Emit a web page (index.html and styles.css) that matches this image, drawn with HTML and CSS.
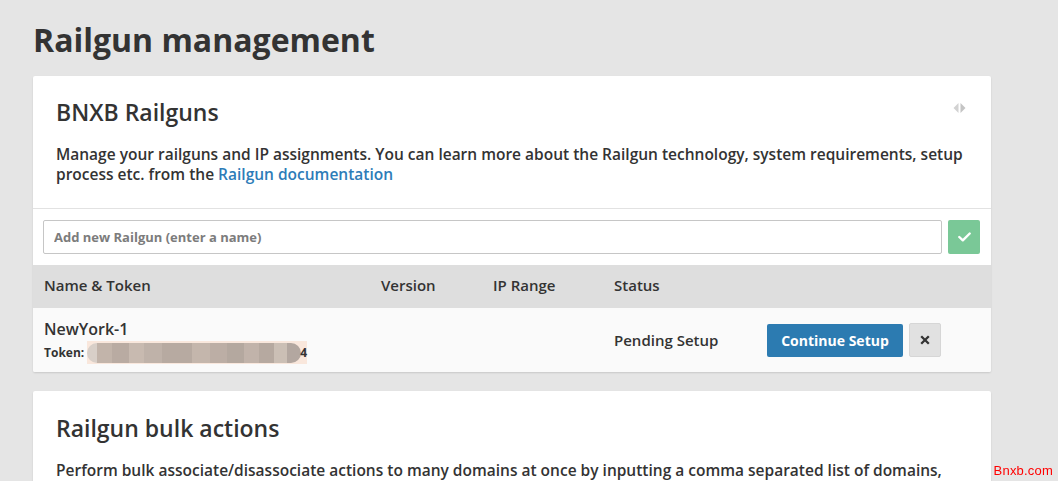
FILE: index.html
```html
<!DOCTYPE html>
<html>
<head>
<meta charset="utf-8">
<title>Railgun management</title>
<link rel="stylesheet" href="styles.css">
</head>
<body>
<div class="page">
  <h1 class="page-title">Railgun management</h1>

  <section class="card">
    <div class="card-head">
      <h2 class="card-title">BNXB Railguns</h2>
      <svg class="toggle-icon" width="13" height="10" viewBox="0 0 13 10" aria-hidden="true">
        <polygon points="5.5,0 0.5,5 5.5,10" fill="#d2d2d2"/>
        <polygon points="7.5,0 12.5,5 7.5,10" fill="#c4c4c4"/>
      </svg>
      <p class="card-desc">Manage your railguns and IP assignments. You can learn more about the Railgun technology, system requirements, setup process etc. from the <a class="link" href="#">Railgun documentation</a></p>
    </div>

    <div class="add-row">
      <input class="add-input" type="text" placeholder="Add new Railgun (enter a name)">
      <button class="add-btn" type="button" aria-label="Add">
        <svg width="13" height="10" viewBox="0 0 13 10" aria-hidden="true">
          <polyline points="1.3,5 4.8,8.3 11.7,1.5" fill="none" stroke="#fff" stroke-width="2.4" stroke-linecap="round" stroke-linejoin="round"/>
        </svg>
      </button>
    </div>

    <div class="rg-table">
      <div class="rg-head">
        <div class="col">Name &amp; Token</div>
        <div class="col">Version</div>
        <div class="col">IP Range</div>
        <div class="col">Status</div>
        <div class="col"></div>
      </div>
      <div class="rg-row">
        <div class="col name-cell">
          <div class="rg-name">NewYork-1</div>
          <div class="rg-token">Token: <span class="token-mask"><span class="token-blur"></span><span class="token-end">4</span></span></div>
        </div>
        <div class="col"></div>
        <div class="col"></div>
        <div class="col status">Pending Setup</div>
        <div class="col actions">
          <button class="btn-primary" type="button">Continue Setup</button>
          <button class="btn-remove" type="button" aria-label="Remove">
            <svg width="10" height="10" viewBox="0 0 10 10" aria-hidden="true">
              <path d="M1.2 1.2 L8.8 8.8 M8.8 1.2 L1.2 8.8" stroke="#333" stroke-width="2.3" stroke-linecap="butt"/>
            </svg>
          </button>
        </div>
      </div>
    </div>
  </section>

  <section class="card card-bulk">
    <div class="card-head card-head-plain">
      <h2 class="card-title">Railgun bulk actions</h2>
      <p class="card-desc">Perform bulk associate/disassociate actions to many domains at once by inputting a comma separated list of domains, and selecting the Railgun you want to use for them.</p>
    </div>
  </section>
</div>
<div class="watermark">Bnxb.com</div>
</body>
</html>
```

FILE: styles.css
```css
* {
  box-sizing: border-box;
}

html, body {
  margin: 0;
  padding: 0;
}

body {
  background: #e5e5e5;
  color: #333;
  font-family: "Open Sans", "Liberation Sans", sans-serif;
  overflow: hidden;
}

.page {
  width: 958px;
  margin-left: 33px;
  padding-top: 20px;
}

.page-title {
  margin: 0 0 16px;
  font-size: 32px;
  line-height: 40px;
  font-weight: 700;
  color: #333;
}

.card {
  position: relative;
  background: #fff;
  border-radius: 2px;
  box-shadow: 0 1px 2px rgba(0, 0, 0, 0.13);
  margin-bottom: 18px;
}

.card-bulk {
  margin-top: 19px;
}

.card-head {
  position: relative;
  padding: 21px 23px 24px;
  border-bottom: 1px solid #e2e2e2;
}

.card-head-plain {
  border-bottom: 0;
}

.card-title {
  margin: 0;
  font-size: 23px;
  line-height: 30px;
  font-weight: 600;
  color: #333;
}

.card-bulk .card-title {
  margin-top: 1px;
}

.toggle-icon {
  position: absolute;
  top: 27px;
  right: 25px;
}

.card-desc {
  margin: 17px 0 0;
  font-size: 15.5px;
  line-height: 20px;
  font-weight: 600;
  color: #333;
}

.link {
  color: #2d7cb8;
  text-decoration: none;
}

.add-row {
  display: flex;
  gap: 6px;
  padding: 11px 11px 11px 10px;
}

.add-input {
  flex: 1;
  height: 34px;
  border: 1px solid #c6c6c6;
  border-radius: 2px;
  padding: 0 10px;
  font-family: "Open Sans", "Liberation Sans", sans-serif;
  font-size: 13px;
  font-weight: 700;
  color: #333;
  background: #fff;
  outline: none;
}

.add-input::placeholder {
  color: #7c7c7c;
}

.add-btn {
  width: 32px;
  height: 34px;
  border: 0;
  border-radius: 2px;
  background: #7ac897;
  display: flex;
  align-items: center;
  justify-content: center;
  padding: 0;
}

.rg-head,
.rg-row {
  display: grid;
  grid-template-columns: 337px 112px 121px 153px 1fr;
  padding-left: 11px;
  align-items: center;
}

.rg-head {
  height: 43px;
  padding-bottom: 4px;
  background: #dedede;
  font-size: 15px;
  font-weight: 600;
  color: #333;
}

.rg-row {
  height: 64px;
  background: #fafafa;
  border-radius: 0 0 2px 2px;
}

.name-cell {
  padding-top: 3px;
}

.rg-name {
  font-size: 16px;
  line-height: 20px;
  font-weight: 600;
  color: #333;
}

.rg-token {
  display: flex;
  align-items: center;
  font-size: 12px;
  line-height: 22px;
  font-weight: 700;
  color: #333;
  margin-top: 2px;
}

.token-mask {
  display: inline-flex;
  align-items: center;
  width: 220px;
  height: 23px;
  margin-left: 3px;
  background: #f9e7dc;
}

.token-blur {
  display: block;
  width: 214px;
  height: 20px;
  border-radius: 10px;
  background: linear-gradient(90deg,
    #d8cfc8 0, #d8cfc8 10px,
    #c2b4aa 10px, #c2b4aa 25px,
    #b9aba2 25px, #b9aba2 42px,
    #c8bab0 42px, #c8bab0 57px,
    #bfb2a9 57px, #bfb2a9 75px,
    #b7aaa1 75px, #b7aaa1 105px,
    #c4b6ac 105px, #c4b6ac 123px,
    #bcaea5 123px, #bcaea5 140px,
    #b4a89f 140px, #b4a89f 157px,
    #c1b3aa 157px, #c1b3aa 172px,
    #b6a9a0 172px, #b6a9a0 187px,
    #cbbfb5 187px, #cbbfb5 200px,
    #b3a7a0 200px, #b3a7a0 214px);
}

.token-end {
  margin-left: -1px;
}

.status {
  font-size: 15px;
  font-weight: 600;
  color: #333;
  padding-bottom: 1px;
}

.actions {
  display: flex;
  align-items: center;
  gap: 6px;
}

.btn-primary {
  height: 33px;
  width: 136px;
  border: 0;
  border-radius: 2px;
  background: #2c7bb1;
  color: #fff;
  font-family: "Open Sans", "Liberation Sans", sans-serif;
  font-size: 14px;
  font-weight: 700;
  padding: 0;
}

.btn-remove {
  width: 32px;
  height: 34px;
  border: 1px solid #d6d6d6;
  border-radius: 2px;
  background: #e1e1e1;
  display: flex;
  align-items: center;
  justify-content: center;
  padding: 0;
}

.watermark {
  position: fixed;
  right: 5px;
  bottom: 3px;
  font-family: "Liberation Sans", Arial, sans-serif;
  font-size: 13px;
  letter-spacing: 0.2px;
  color: #ff0000;
}
```
